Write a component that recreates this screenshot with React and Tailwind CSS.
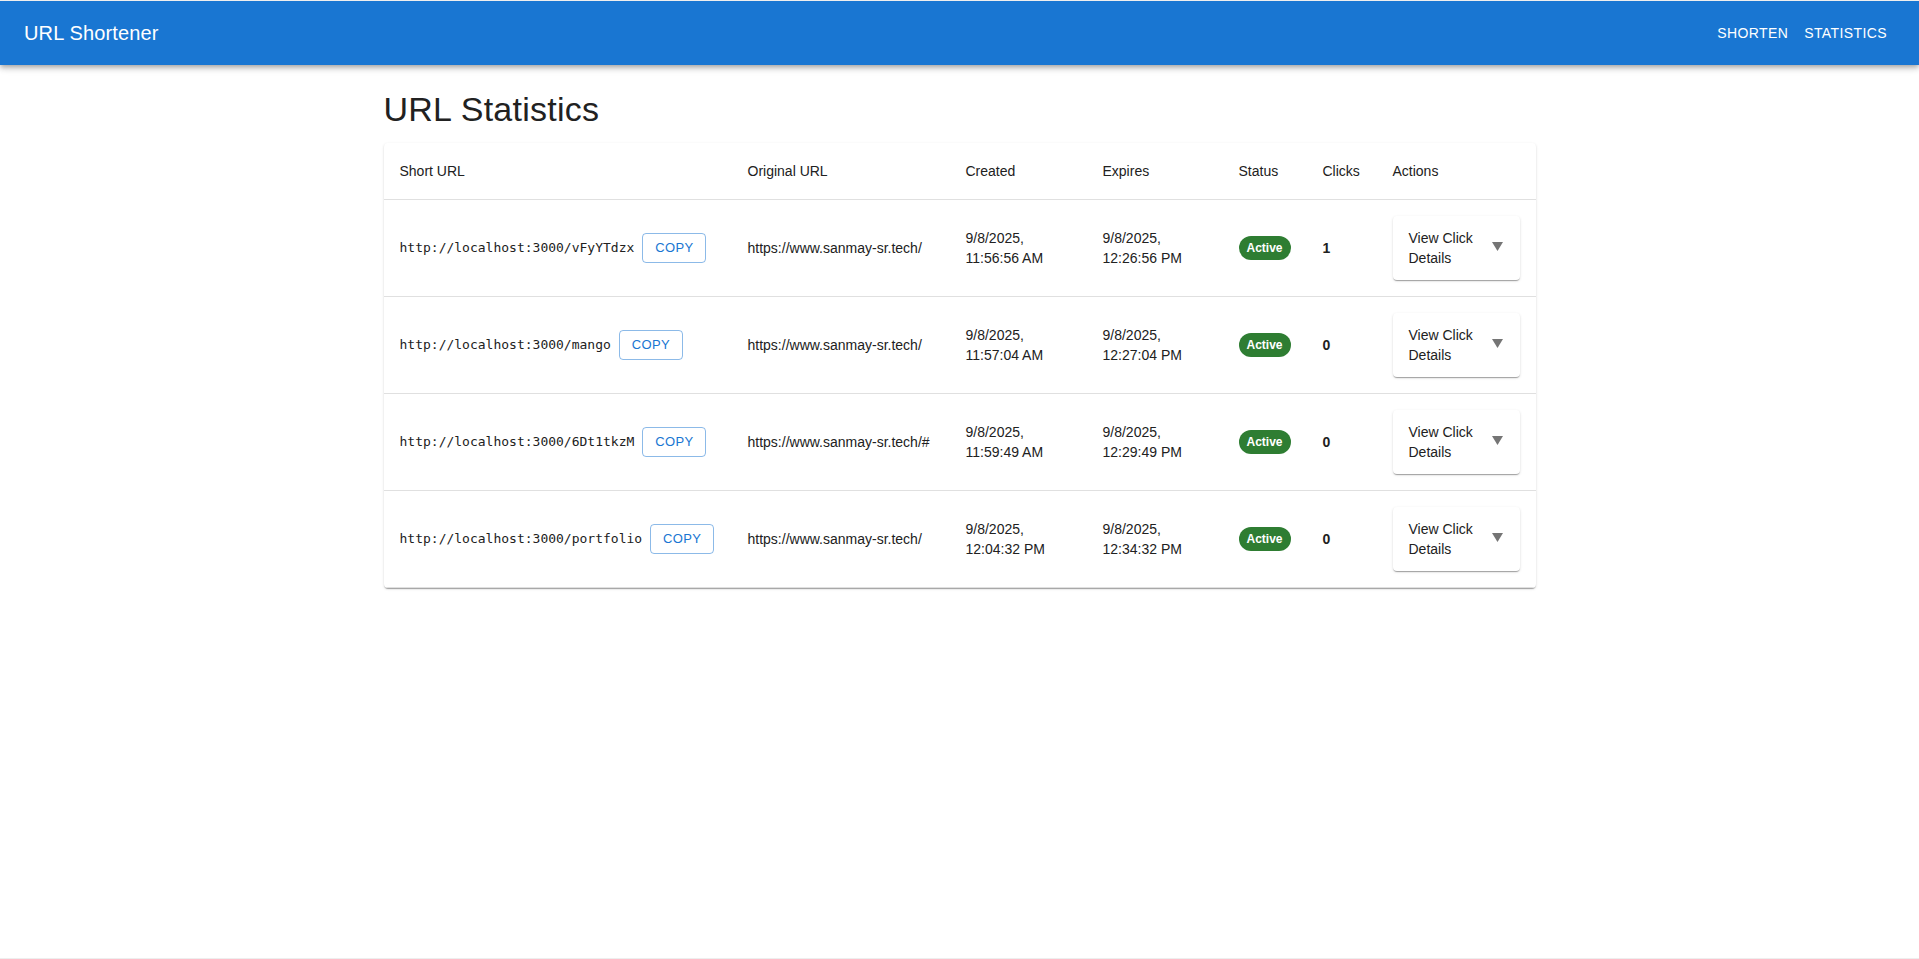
import React from "react";

const rows = [
  { short: "http://localhost:3000/vFyYTdzx", orig: "https://www.sanmay-sr.tech/", c1: "9/8/2025,", c2: "11:56:56 AM", e1: "9/8/2025,", e2: "12:26:56 PM", clicks: 1 },
  { short: "http://localhost:3000/mango", orig: "https://www.sanmay-sr.tech/", c1: "9/8/2025,", c2: "11:57:04 AM", e1: "9/8/2025,", e2: "12:27:04 PM", clicks: 0 },
  { short: "http://localhost:3000/6Dt1tkzM", orig: "https://www.sanmay-sr.tech/#", c1: "9/8/2025,", c2: "11:59:49 AM", e1: "9/8/2025,", e2: "12:29:49 PM", clicks: 0 },
  { short: "http://localhost:3000/portfolio", orig: "https://www.sanmay-sr.tech/", c1: "9/8/2025,", c2: "12:04:32 PM", e1: "9/8/2025,", e2: "12:34:32 PM", clicks: 0 },
];

const sans = { fontFamily: '"Liberation Sans", Arial, Helvetica, sans-serif' };

export default function App() {
  return (
    <div className="h-[959px] border-t border-b border-[#eeeeee] bg-white text-[#212121] overflow-hidden" style={sans}>
      <header className="h-16 bg-[#1976d2] text-white flex items-center px-6 shadow-[0px_2px_4px_-1px_rgba(0,0,0,0.2),0px_4px_5px_0px_rgba(0,0,0,0.14),0px_1px_10px_0px_rgba(0,0,0,0.12)] relative z-10">
        <div className="flex-1 text-[20px] font-medium leading-[1.6] tracking-[0.0075em]">URL Shortener</div>
        <div className="flex items-center">
          <button className="px-2 py-[6px] text-[14px] font-medium uppercase tracking-[0.02857em] leading-[1.75] text-white">Shorten</button>
          <button className="px-2 py-[6px] text-[14px] font-medium uppercase tracking-[0.02857em] leading-[1.75] text-white">Statistics</button>
        </div>
      </header>

      <main className="w-[1200px] mx-auto px-6">
        <h1 className="mt-6 mb-[12px] text-[34px] font-normal leading-[1.235] tracking-[0.00735em]">URL Statistics</h1>

        <div className="bg-white rounded shadow-[0px_2px_1px_-1px_rgba(0,0,0,0.2),0px_1px_1px_0px_rgba(0,0,0,0.14),0px_1px_3px_0px_rgba(0,0,0,0.12)] overflow-hidden">
          <table className="w-full border-collapse table-fixed">
            <thead>
              <tr className="text-left">
                <th className="w-[348px] p-4 text-[14px] font-medium leading-6 border-b border-[#e0e0e0]">Short URL</th>
                <th className="w-[218px] p-4 text-[14px] font-medium leading-6 border-b border-[#e0e0e0]">Original URL</th>
                <th className="w-[137px] p-4 text-[14px] font-medium leading-6 border-b border-[#e0e0e0]">Created</th>
                <th className="w-[136px] p-4 text-[14px] font-medium leading-6 border-b border-[#e0e0e0]">Expires</th>
                <th className="w-[84px] p-4 text-[14px] font-medium leading-6 border-b border-[#e0e0e0]">Status</th>
                <th className="w-[70px] p-4 text-[14px] font-medium leading-6 border-b border-[#e0e0e0]">Clicks</th>
                <th className="w-[159px] p-4 text-[14px] font-medium leading-6 border-b border-[#e0e0e0]">Actions</th>
              </tr>
            </thead>
            <tbody>
              {rows.map((r, i) => (
                <tr key={i} className="text-[14px] leading-[20px]">
                  <td className="p-4 border-b border-[#e0e0e0] align-middle">
                    <div className="flex items-center">
                      <span className="text-[13px] leading-[20px] whitespace-nowrap" style={{ fontFamily: '"DejaVu Sans Mono", monospace' }}>{r.short}</span>
                      <button className="ml-2 min-w-16 h-[30px] px-[9px] border border-[rgba(25,118,210,0.5)] rounded text-[#1976d2] text-[13px] font-medium uppercase tracking-[0.02857em] leading-[22px]">Copy</button>
                    </div>
                  </td>
                  <td className="p-4 border-b border-[#e0e0e0] align-middle whitespace-nowrap">{r.orig}</td>
                  <td className="p-4 border-b border-[#e0e0e0] align-middle">
                    <div>{r.c1}</div>
                    <div>{r.c2}</div>
                  </td>
                  <td className="p-4 border-b border-[#e0e0e0] align-middle">
                    <div>{r.e1}</div>
                    <div>{r.e2}</div>
                  </td>
                  <td className="p-4 border-b border-[#e0e0e0] align-middle">
                    <span className="inline-flex items-center h-6 px-2 rounded-full bg-[#2e7d32] text-white text-[12px] font-bold leading-none">Active</span>
                  </td>
                  <td className="p-4 border-b border-[#e0e0e0] align-middle font-bold">{r.clicks}</td>
                  <td className="p-4 border-b border-[#e0e0e0] align-middle">
                    <div className="w-[127px] h-16 bg-white rounded shadow-[0px_2px_1px_-1px_rgba(0,0,0,0.2),0px_1px_1px_0px_rgba(0,0,0,0.14),0px_1px_3px_0px_rgba(0,0,0,0.12)] flex items-center pl-4 pr-[17px]">
                      <div className="flex-1 text-[14px] leading-[20px]">
                        <div>View Click</div>
                        <div>Details</div>
                      </div>
                      <svg width="11" height="9" viewBox="0 0 11 9" className="mt-[-2px]">
                        <path d="M0 0 H11 L5.5 9 Z" fill="#757575" />
                      </svg>
                    </div>
                  </td>
                </tr>
              ))}
            </tbody>
          </table>
        </div>
      </main>
    </div>
  );
}
